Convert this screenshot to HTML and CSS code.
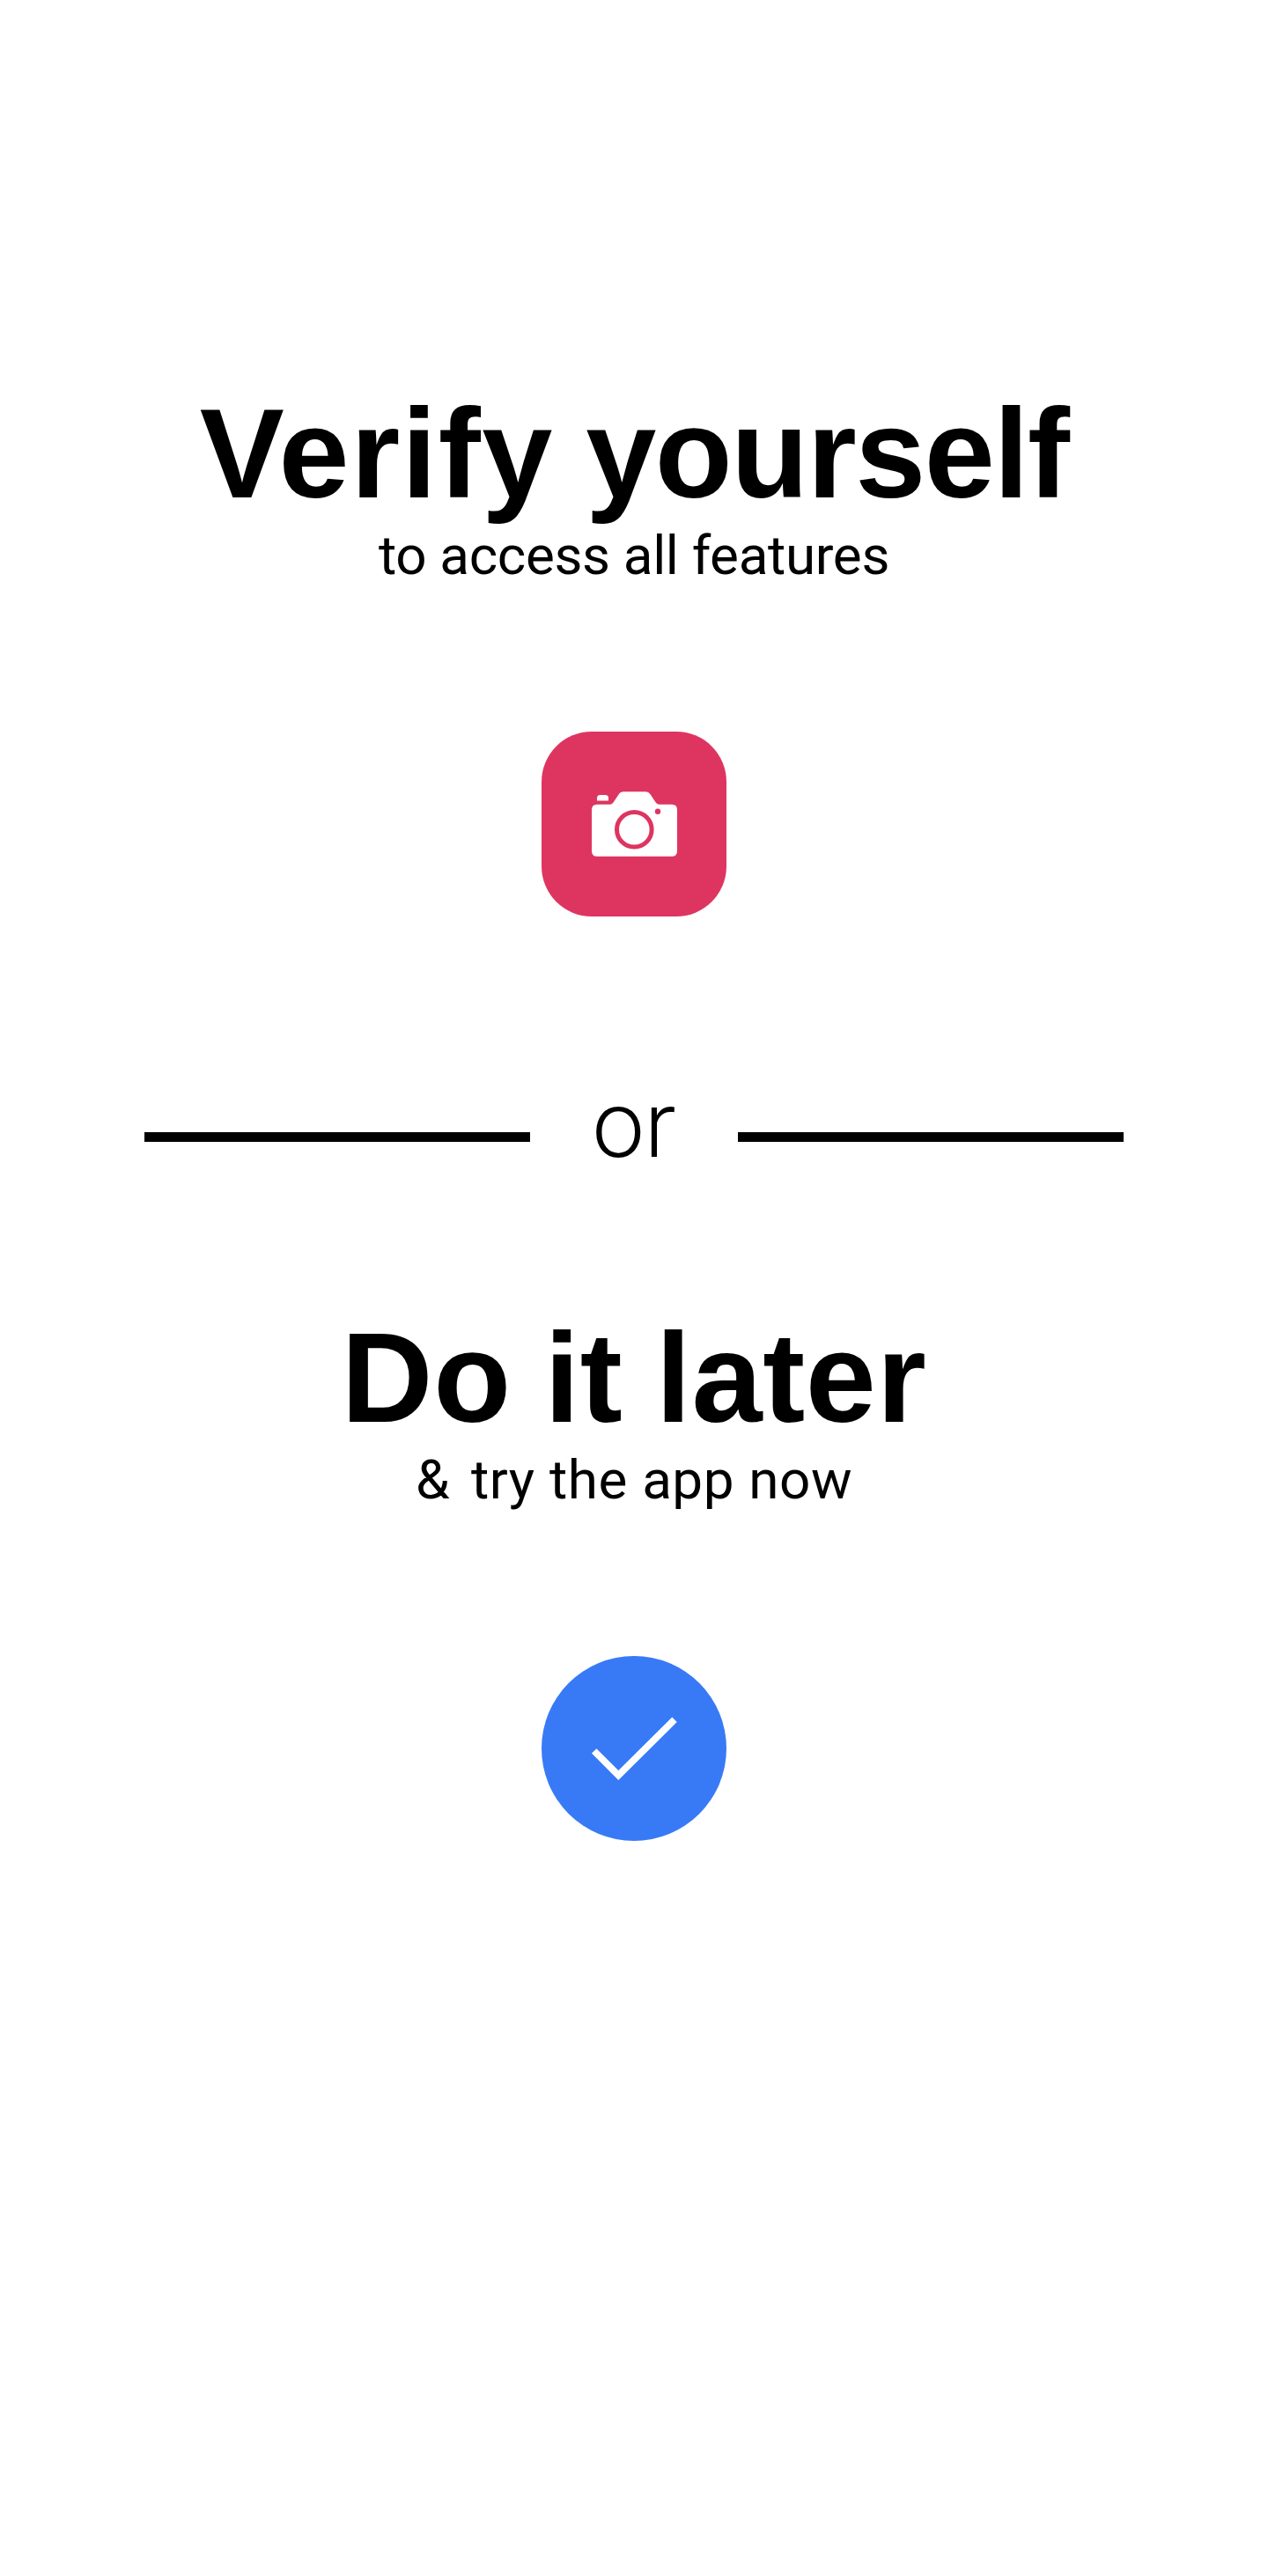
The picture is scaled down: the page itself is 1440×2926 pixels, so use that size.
FILE: index.html
```
<!DOCTYPE html>
<html lang="en">
<head>
<meta charset="utf-8">
<title>Verify yourself</title>
<link rel="stylesheet" href="styles.css">
</head>
<body>
<main class="screen">
  <section class="choice">
    <h1 class="title title-verify"><span class="loose">Verify</span> <span class="tight">yourself</span></h1>
    <p class="subtitle subtitle-verify">to access all features</p>
    <button class="action action-camera" aria-label="Open camera">
      <svg viewBox="0 0 210 210" width="210" height="210">
        <path fill="#fff" d="M63 78.500v-3q0-3.500 3.500-3.500h6q3.500 0 3.500 3.500v3z"/>
        <path fill="#fff" d="M63 82.700H77.500Q80 82.700 81.500 80.500L87.500 71.500Q89.600 68.300 93 68.300H118.500Q121.500 68.300 123.600 71.300L129.500 80.200Q131.200 82.700 134 82.700H148Q154 82.700 154 88.700V135.700Q154 141.700 148 141.700H63Q57 141.700 57 135.700V88.700Q57 82.700 63 82.700Z"/>
        <circle cx="105.300" cy="111.300" r="19.800" fill="none" stroke="#de3560" stroke-width="5"/>
        <circle cx="132" cy="90.700" r="3.200" fill="#de3560"/>
      </svg>
    </button>
  </section>
  <div class="divider">
    <span class="rule"></span>
    <span class="or">or</span>
    <span class="rule"></span>
  </div>
  <section class="choice">
    <h1 class="title title-later">Do it later</h1>
    <p class="subtitle subtitle-later"><span class="amp">&amp;</span> try the app now</p>
    <button class="action action-check" aria-label="Continue">
      <svg viewBox="0 0 210 210" width="210" height="210">
        <path d="M59.700 107.900L87.300 135.500L151 72.300" fill="none" stroke="#fff" stroke-width="7.700"/>
      </svg>
    </button>
  </section>
</main>
</body>
</html>
```
FILE: styles.css
```
body {
  margin: 0;
  background: #fff;
  color: #000;
}

.screen {
  box-sizing: border-box;
  min-height: 2926px;
  padding: 441px 164px 0;
}

.choice {
  display: flex;
  flex-direction: column;
  align-items: center;
}

.title {
  margin: 0;
  font: 700 144px/150px "Liberation Sans", Arial, sans-serif;
  white-space: nowrap;
}

.title-verify { word-spacing: -4px; }
.loose { letter-spacing: 1.7px; }
.tight { letter-spacing: -1.5px; }

.title-later {
  letter-spacing: 0.7px;
  word-spacing: -3.5px;
}

.subtitle {
  margin: 5px 0 0;
  font: 400 62px/70px Roboto, sans-serif;
  white-space: nowrap;
}

.subtitle-verify { letter-spacing: -0.35px; }

.subtitle-later {
  letter-spacing: 0.5px;
  word-spacing: 0.5px;
}

.amp { letter-spacing: 8px; }

.action {
  display: block;
  width: 210px;
  height: 210px;
  margin: 165px 0 0;
  padding: 0;
  border: 0;
}

.action svg { display: block; }

.action-camera {
  border-radius: 57px;
  background: #de3560;
}

.action-check {
  border-radius: 50%;
  background: #387af6;
}

.divider {
  display: flex;
  align-items: center;
  justify-content: space-between;
  margin: 182px 0 158px;
}

.rule {
  width: 438px;
  height: 11px;
  margin-top: 27px;
  background: #000;
}

.or {
  font: 300 106px/110px Roboto, sans-serif;
}
```
